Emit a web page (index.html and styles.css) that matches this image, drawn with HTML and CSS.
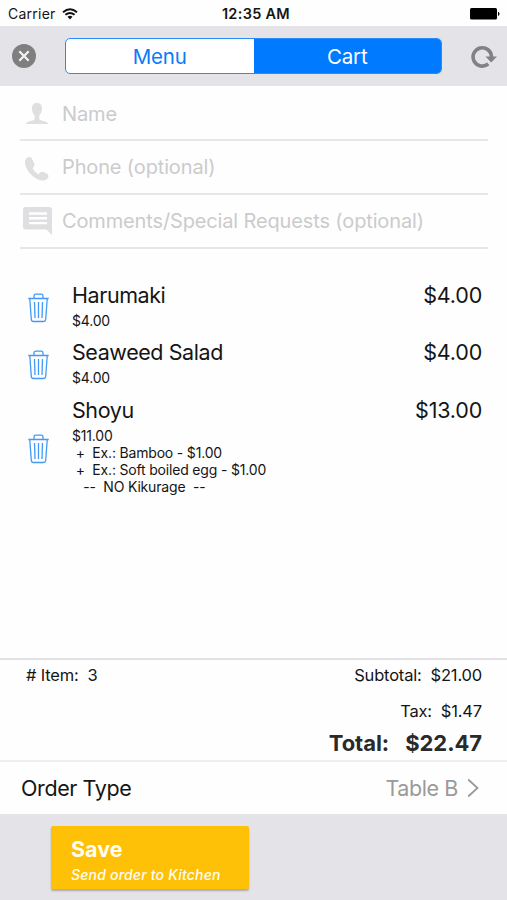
FILE: index.html
```html
<!DOCTYPE html>
<html lang="en">
<head>
<meta charset="utf-8">
<title>Cart</title>
<link rel="stylesheet" href="styles.css">
</head>
<body>
<svg class="defs" aria-hidden="true">
  <symbol id="trash" viewBox="0 0 22 30">
    <path d="M.8 5.5h20.400M6.500 5V3Q6.500 1.200 8.300 1.200h5.400Q15.500 1.200 15.500 3v2M2.300 6l1.500 20.500Q4 28.500 6 28.500h10Q18 28.500 18.200 26.500L19.700 6M7 9l.5 16M11 9v16M15 9l-.5 16" fill="none" stroke="#4399f5" stroke-width="1.300"/>
  </symbol>
</svg>
<div class="status">
  <div class="carrier"><span>Carrier</span>
    <svg width="16" height="12" viewBox="0 0 16 12"><path d="M1 4.300Q8-1.700 15 4.300M3.400 6.800Q8 3 12.600 6.800" fill="none" stroke="#111" stroke-width="1.900"/><path d="M5.500 8.700Q8 6.700 10.500 8.700L8 11.500z" fill="#111"/></svg>
  </div>
  <div class="clock">12:35 AM</div>
  <svg class="battery" width="30" height="12" viewBox="0 0 30 12"><rect width="27" height="11.500" rx="1.500"/><path d="M28 3.700Q29.500 4 29.500 5.800T28 8z"/></svg>
</div>
<header class="nav">
  <svg width="24" height="24" viewBox="0 0 24 24"><circle cx="12" cy="12" r="12" fill="#7f7f80"/><path d="M7.300 7.300l9.400 9.400M16.700 7.300l-9.400 9.400" stroke="#f2f2f3" stroke-width="2.300"/></svg>
  <div class="segments"><div class="segment">Menu</div><div class="segment active">Cart</div></div>
  <svg class="refresh" width="26" height="24" viewBox="0 0 26 24"><path d="M17.300 18.900A9.200 9.200 0 1 1 20.500 12" fill="none" stroke="#828283" stroke-width="3.600"/><path d="M14.500 11.500h11.500L20.200 17.500z" fill="#828283"/></svg>
</header>
<form class="fields">
  <div class="field">
    <svg class="person" width="32" height="30" viewBox="0 0 32 30"><path d="M17 4c-3.800 0-5.300 2.600-5 6 .2 2.800 1 4.800 2.700 6.300v4c-2 2-7.700 1.500-8.900 4.700h22.400c-1.200-3.200-6.900-2.700-8.900-4.700v-4c1.700-1.500 2.500-3.500 2.700-6.300.2-3.400-1.200-6-5-6z" fill="#dfdfe1"/></svg>
    <span>Name</span>
  </div>
  <div class="field">
    <svg class="phone" width="32" height="30" viewBox="0 0 32 30"><path d="M9 3Q5.500 3.500 5 7.500C4.500 16 15 27 24 26.500q3.500-.5 4.500-4 .2-1.500-1-2.500l-4-2q-2-.8-3.500.7l-1.500 1.500c-2.500-1.500-4.500-3.500-6-6l1.500-1.800q1-1.400.2-3l-2.500-5.200q-.8-1.300-2.700-1.200z" fill="#dfdfe1"/></svg>
    <span>Phone (optional)</span>
  </div>
  <div class="field">
    <svg width="32" height="30" viewBox="0 0 32 30"><path d="M5.200 1h24.600q2.200 0 2.200 2.500v25.500l-5.500-5.500H5.200Q3 23.500 3 21V3.500Q3 1 5.200 1z" fill="#dfdfe1"/><path d="M9 7.500h18M9 12.300h18M9 17.100h18" stroke="#fff" stroke-width="2.400"/></svg>
    <span>Comments/Special Requests (optional)</span>
  </div>
</form>
<main class="items">
  <div class="item">
    <svg class="trash"><use href="#trash"/></svg>
    <div class="info"><div class="title"><span>Harumaki</span><span class="price">$4.00</span></div><div class="detail">$4.00</div></div>
  </div>
  <div class="item">
    <svg class="trash"><use href="#trash"/></svg>
    <div class="info"><div class="title"><span>Seaweed Salad</span><span class="price">$4.00</span></div><div class="detail">$4.00</div></div>
  </div>
  <div class="item tall">
    <svg class="trash"><use href="#trash"/></svg>
    <div class="info"><div class="title"><span>Shoyu</span><span class="price">$13.00</span></div><div class="detail">$11.00
 +  Ex.: Bamboo - $1.00
 +  Ex.: Soft boiled egg - $1.00
   --  NO Kikurage  --</div></div>
  </div>
</main>
<section class="summary">
  <div class="row"><span># Item:  3</span><span>Subtotal:  $21.00</span></div>
  <div class="row tax"><span>Tax:  $1.47</span></div>
  <div class="row total"><span>Total:</span><span>$22.47</span></div>
</section>
<section class="order">
  <span>Order Type</span>
  <div class="order-value"><span>Table B</span><svg width="12" height="20" viewBox="0 0 12 20"><path d="M1.200 1.500L10.500 10 1.200 18.500" fill="none" stroke="#9a9a9a" stroke-width="1.800"/></svg></div>
</section>
<footer class="actions">
  <div class="save"><strong>Save</strong><em>Send order to Kitchen</em></div>
</footer>
</body>
</html>
```
FILE: styles.css
```css
* { box-sizing: border-box; }
body {
  margin: 0;
  width: 507px;
  height: 900px;
  overflow: hidden;
  display: flex;
  flex-direction: column;
  background: #fefefe;
  color: #151515;
  font-family: Inter, "Liberation Sans", sans-serif;
}
svg { display: block; flex: none; }
.defs { position: absolute; width: 0; height: 0; }
.status {
  height: 26px;
  padding: 1px 7px 0 8px;
  display: grid;
  grid-template-columns: 1fr auto 1fr;
  align-items: center;
  font-size: 14px;
}
.carrier { display: flex; align-items: center; gap: 6px; letter-spacing: 0.25px; }
.clock { font-weight: 600; font-size: 14.5px; letter-spacing: 0.3px; padding-left: 4px; }
.battery { justify-self: end; }
.nav {
  height: 60px;
  padding: 0 10px 0 12px;
  display: flex;
  align-items: center;
  justify-content: space-between;
  background: #e4e4e8;
}
.refresh { margin-top: 2px; }
.segments {
  display: flex;
  width: 377px;
  height: 36px;
  margin-top: -1px;
  border: 1px solid #2a8cfb;
  border-radius: 5px;
  overflow: hidden;
  background: #fff;
}
.segment {
  flex: 1;
  text-align: center;
  font-size: 20.5px;
  line-height: 35px;
  color: #0a7cf8;
  letter-spacing: -0.2px;
}
.segment.active { background: #007aff; color: #fff; }
.fields { padding: 0 19px 0 20px; }
.field {
  height: 54px;
  display: flex;
  align-items: center;
  gap: 10px;
  border-bottom: 2px solid #e7e7e9;
  color: #cbcbcd;
  font-size: 20px;
  letter-spacing: -0.14px;
}
.field:first-child { height: 55px; padding-top: 2px; }
.phone { margin: 2px 0 -2px; }
.items { padding: 31px 25px 0 27px; height: 409px; }
.item { display: flex; align-items: center; height: 57.3px; gap: 22px; }
.item.tall { height: 109px; }
.trash { width: 23px; height: 30px; margin-top: -1px; }
.info { flex: 1; align-self: flex-start; }
.title {
  display: flex;
  justify-content: space-between;
  font-size: 21.5px;
  line-height: 30px;
  letter-spacing: -0.42px;
}
.price { letter-spacing: -0.2px; }
.detail {
  white-space: pre;
  font-size: 14px;
  line-height: 17.2px;
  margin-top: 2px;
  letter-spacing: -0.18px;
}
.summary { height: 102px; border-top: 2px solid #e2e2e4; padding: 0 25px 0 26px; }
.row {
  display: flex;
  justify-content: space-between;
  white-space: pre;
  font-size: 16.5px;
  line-height: 31px;
  letter-spacing: -0.18px;
}
.row.tax { justify-content: flex-end; line-height: 40px; }
.row.total {
  justify-content: flex-end;
  gap: 16px;
  line-height: 24px;
  font-size: 22px;
  font-weight: 650;
  letter-spacing: -0.05px;
  color: #2a2a2a;
}
.order {
  height: 54px;
  border-top: 2px solid #efeff0;
  padding: 0 28px 0 21px;
  display: flex;
  align-items: center;
  justify-content: space-between;
  font-size: 21.5px;
  letter-spacing: -0.4px;
}
.order-value { display: flex; align-items: center; gap: 9px; color: #9a9a9a; }
.actions { flex: 1; background: #e4e4e8; padding: 12px 51px 0; }
.save {
  width: 198px;
  height: 63px;
  padding: 8px 20px 0;
  border-radius: 2px;
  background: #ffc107;
  box-shadow: 0 2px 2px #aaaaae;
  color: #fffdf2;
}
.save strong { display: block; font-size: 21.5px; line-height: 30px; }
.save em {
  display: block;
  font-size: 14px;
  line-height: 21px;
  font-weight: 500;
  letter-spacing: 0.2px;
  white-space: nowrap;
}
```
